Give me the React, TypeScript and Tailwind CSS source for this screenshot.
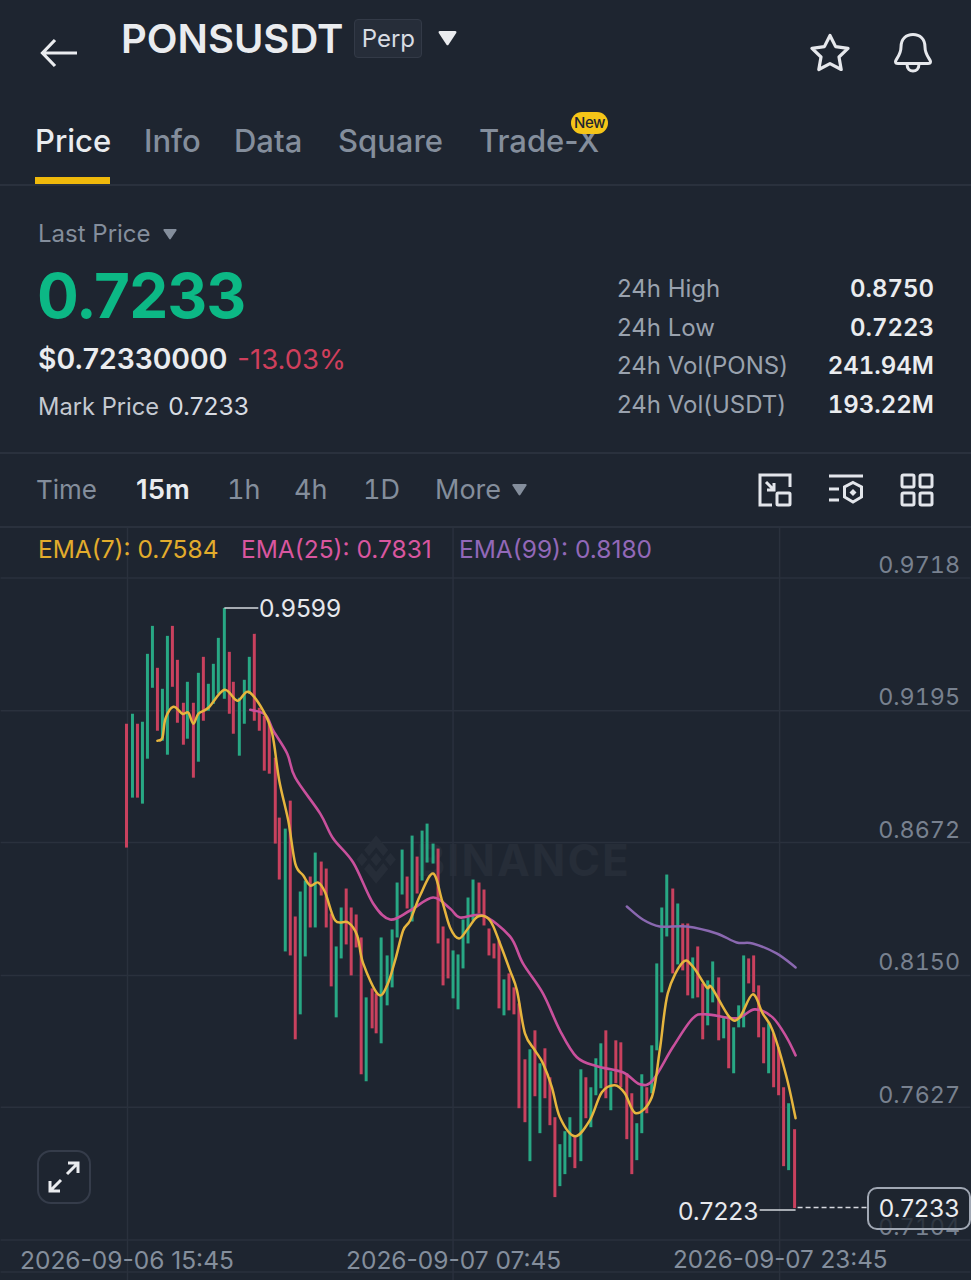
const FONT = "font-['Inter','Noto_Sans',sans-serif]";

type Candle = [number, number, number, "r" | "g"];

const candles: Candle[] = [
  [126, 723, 847, "r"], [132, 713, 797, "g"], [137, 723, 797, "r"], [142, 721, 803, "g"],
  [147, 653, 758, "g"], [152, 625, 687, "g"], [157, 667, 730, "r"], [162, 688, 740, "g"],
  [167, 635, 754, "g"], [172, 625, 686, "r"], [177, 659, 722, "r"], [183, 702, 744, "r"],
  [187, 681, 738, "g"], [193, 702, 777, "r"], [198, 672, 761, "g"], [203, 656, 720, "r"],
  [208, 683, 710, "g"], [213, 663, 703, "g"], [218, 637, 693, "g"], [224, 607, 698, "g"],
  [229, 651, 713, "r"], [233, 681, 733, "r"], [239, 697, 755, "g"], [244, 679, 723, "g"],
  [249, 656, 693, "g"], [254, 633, 720, "r"], [259, 707, 730, "r"], [264, 715, 770, "r"],
  [269, 722, 773, "r"], [275, 757, 843, "r"], [279, 817, 879, "r"], [285, 828, 951, "g"],
  [290, 800, 955, "r"], [295, 916, 1039, "r"], [300, 891, 1014, "g"], [305, 880, 956, "g"],
  [310, 876, 927, "r"], [315, 852, 927, "g"], [321, 861, 895, "r"], [326, 868, 927, "r"],
  [331, 913, 986, "r"], [336, 946, 1017, "g"], [341, 907, 958, "g"], [346, 888, 944, "r"],
  [351, 907, 975, "r"], [356, 914, 947, "r"], [361, 937, 1074, "r"], [366, 997, 1081, "g"],
  [372, 988, 1028, "r"], [376, 993, 1033, "r"], [381, 937, 1043, "g"], [387, 955, 1005, "g"],
  [392, 929, 987, "g"], [397, 882, 937, "g"], [402, 849, 894, "g"], [407, 876, 908, "r"],
  [412, 835, 921, "g"], [417, 856, 893, "r"], [422, 830, 880, "g"], [427, 823, 862, "g"],
  [433, 843, 863, "g"], [438, 848, 943, "r"], [443, 926, 985, "r"], [448, 938, 978, "r"],
  [453, 950, 998, "g"], [458, 954, 1009, "g"], [463, 919, 968, "g"], [468, 897, 943, "g"],
  [473, 879, 920, "g"], [479, 882, 913, "r"], [484, 889, 925, "r"], [489, 928, 955, "r"],
  [494, 943, 958, "r"], [499, 940, 1008, "r"], [504, 979, 1015, "g"], [509, 973, 1010, "r"],
  [514, 987, 1014, "r"], [519, 1003, 1108, "r"], [525, 1059, 1122, "r"], [530, 1049, 1161, "g"],
  [535, 1030, 1096, "r"], [540, 1063, 1133, "g"], [545, 1048, 1098, "r"], [550, 1077, 1125, "r"],
  [555, 1117, 1197, "r"], [560, 1144, 1186, "g"], [565, 1131, 1174, "g"], [570, 1117, 1157, "g"],
  [575, 1135, 1168, "r"], [581, 1069, 1161, "g"], [586, 1077, 1118, "r"], [591, 1087, 1127, "g"],
  [596, 1058, 1095, "g"], [601, 1043, 1088, "g"], [606, 1030, 1098, "r"], [611, 1071, 1110, "g"],
  [616, 1040, 1083, "r"], [621, 1042, 1087, "r"], [627, 1073, 1139, "r"], [632, 1093, 1174, "r"],
  [637, 1123, 1160, "g"], [642, 1074, 1133, "g"], [647, 1087, 1113, "r"], [652, 1045, 1093, "g"],
  [657, 963, 1050, "g"], [662, 907, 992, "g"], [667, 874, 936, "g"], [673, 888, 973, "r"],
  [678, 903, 964, "g"], [683, 923, 970, "r"], [688, 923, 995, "r"], [693, 957, 998, "g"],
  [698, 946, 997, "r"], [703, 983, 1039, "r"], [708, 980, 1025, "g"], [713, 961, 1002, "g"],
  [719, 977, 1040, "r"], [724, 1017, 1038, "g"], [729, 1017, 1068, "r"], [734, 1027, 1073, "g"],
  [739, 1005, 1027, "g"], [744, 955, 1027, "g"], [749, 958, 983, "r"], [754, 955, 992, "r"],
  [759, 985, 1037, "r"], [764, 1027, 1063, "r"], [769, 1023, 1073, "g"], [774, 1033, 1087, "r"],
  [779, 1047, 1095, "r"], [784, 1087, 1166, "r"], [789, 1103, 1170, "g"], [795, 1129, 1208, "r"],
];

const ema7: [number, number][] = [
  [157, 740], [162, 737], [165, 718], [173, 706], [182, 713], [188, 712], [193, 723], [198, 713],
  [208, 707], [224, 689], [237, 700], [248, 691], [263, 710], [272, 733], [279, 780], [288, 820],
  [295, 863], [303, 875], [310, 885], [318, 882], [325, 892], [335, 920], [348, 922], [357, 935],
  [363, 963], [378, 994], [387, 985], [395, 960], [403, 930], [410, 920], [420, 895], [433, 873],
  [442, 900], [450, 927], [459, 938], [468, 928], [478, 916], [490, 920], [500, 943], [510, 970],
  [517, 990], [525, 1033], [535, 1050], [543, 1063], [552, 1087], [560, 1117], [575, 1136],
  [590, 1120], [602, 1092], [615, 1085], [625, 1093], [636, 1113], [652, 1097], [660, 1050],
  [668, 993], [683, 962], [693, 966], [707, 987], [712, 987], [730, 1017], [740, 1017], [753, 994],
  [763, 1013], [773, 1030], [787, 1077], [796, 1118],
];

const ema25: [number, number][] = [
  [250, 709], [265, 714], [273, 730], [287, 753], [295, 777], [320, 813], [333, 838], [353, 862],
  [373, 903], [390, 919], [410, 910], [433, 897], [450, 908], [460, 917], [483, 915], [510, 936],
  [523, 963], [543, 993], [560, 1030], [577, 1057], [597, 1066], [623, 1072], [640, 1084],
  [653, 1080], [673, 1047], [693, 1018], [707, 1014], [737, 1018], [755, 1009], [773, 1017],
  [787, 1037], [796, 1055],
];

const ema99: [number, number][] = [
  [627, 906], [643, 919], [660, 926], [687, 926], [717, 933], [737, 942], [753, 943], [777, 953], [796, 967],
];

// catmull-rom through the points so the averages don't look kinked
function smooth(pts: [number, number][]) {
  let d = `M${pts[0][0]} ${pts[0][1]}`;
  for (let i = 0; i < pts.length - 1; i++) {
    const p0 = pts[Math.max(i - 1, 0)];
    const p1 = pts[i];
    const p2 = pts[i + 1];
    const p3 = pts[Math.min(i + 2, pts.length - 1)];
    const c1x = p1[0] + (p2[0] - p0[0]) / 6;
    const c1y = p1[1] + (p2[1] - p0[1]) / 6;
    const c2x = p2[0] - (p3[0] - p1[0]) / 6;
    const c2y = p2[1] - (p3[1] - p1[1]) / 6;
    d += ` C${c1x.toFixed(1)} ${c1y.toFixed(1)} ${c2x.toFixed(1)} ${c2y.toFixed(1)} ${p2[0]} ${p2[1]}`;
  }
  return d;
}

const stats = [
  { label: "24h High", value: "0.8750" },
  { label: "24h Low", value: "0.7223" },
  { label: "24h Vol(PONS)", value: "241.94M" },
  { label: "24h Vol(USDT)", value: "193.22M" },
];

const priceLabels = [
  { text: "0.9718", cls: "top-[22px]" },
  { text: "0.9195", cls: "top-[154px]" },
  { text: "0.8672", cls: "top-[287px]" },
  { text: "0.8150", cls: "top-[419px]" },
  { text: "0.7627", cls: "top-[552px]" },
  { text: "0.7104", cls: "top-[684px]" },
];

function Caret({ className }: { className: string }) {
  return (
    <svg viewBox="0 0 16 12" className={className} fill="currentColor">
      <path d="M1 1.5 C0.6 0.8 1 0 1.8 0 H14.2 C15 0 15.4 0.8 15 1.5 L8.8 11 C8.4 11.6 7.6 11.6 7.2 11 Z" />
    </svg>
  );
}

function Chart() {
  return (
    <svg viewBox="0 527 971 753" className="absolute inset-0 w-full h-full" fill="none">
      <g stroke="#2a313d" strokeWidth="1.5">
        {[577, 710, 842, 975, 1107, 1240, 1272].map((y) => (
          <line key={y} x1="0" x2="971" y1={y} y2={y} />
        ))}
        {[127, 453, 780].map((x) => (
          <line key={x} x1={x} x2={x} y1="527" y2="1280" />
        ))}
      </g>

      {/* watermark logo */}
      <g fill="#262d38" transform="translate(354 832) scale(1.1 1.35)">
        <path d="M20 2 L31 13 L26.5 17.5 L20 11 L13.5 17.5 L9 13 Z" />
        <path d="M20 38 L31 27 L26.5 22.5 L20 29 L13.5 22.5 L9 27 Z" />
        <path d="M20 15 L25 20 L20 25 L15 20 Z" />
        <path d="M7 15 L12 20 L7 25 L2 20 Z" />
        <path d="M33 15 L38 20 L33 25 L28 20 Z" />
      </g>
      <g>
        {candles.map(([x, y1, y2, c], i) => (
          <line
            key={i}
            x1={x}
            x2={x}
            y1={y1}
            y2={y2}
            stroke={c === "r" ? "#c9415e" : "#28a884"}
            strokeWidth="3"
          />
        ))}
      </g>
      <path d={smooth(ema99)} stroke="#8a68b0" strokeWidth="2.5" strokeLinecap="round" />
      <path d={smooth(ema25)} stroke="#c9509c" strokeWidth="2.6" strokeLinecap="round" />
      <path d={smooth(ema7)} stroke="#e6b53e" strokeWidth="2.5" strokeLinecap="round" />

      <path d="M224 607 H258" stroke="#d5d8de" strokeWidth="1.5" />
      <path d="M760 1210 H796" stroke="#d5d8de" strokeWidth="1.5" />
      <path d="M798 1207.5 H867" stroke="#d5d8de" strokeWidth="1.5" strokeDasharray="5 3" />
    </svg>
  );
}

export default function App() {
  return (
    <div className={`${FONT} w-[971px] h-[1280px] overflow-hidden flex flex-col bg-[#1e2530] text-[#eaecef]`}>
      {/* Header */}
      <div className="h-[100px] flex items-start relative">
        <svg viewBox="0 0 38 30" className="w-[38px] h-[30px] ml-[40px] mt-[38px] text-[#eaecef]" fill="none" stroke="currentColor" strokeWidth="3.2">
          <path d="M37 15 H3 M15 2 L2.5 15 L15 28" />
        </svg>
        <div className="ml-[43px] mt-[14px] flex items-start">
          <span className="text-[40px] leading-[50px] font-semibold">PONSUSDT</span>
          <span className="ml-[11px] mt-[5px] h-[39px] w-[68px] flex items-center justify-center rounded-[4px] border border-[#333a47] bg-[#262d39] text-[24px] text-[#d8dce3]">
            Perp
          </span>
          <Caret className="ml-[15px] mt-[17px] w-[21px] h-[15px] text-[#eaecef]" />
        </div>
        <div className="ml-auto mr-[38px] mt-[33px] flex items-start gap-[43px] text-[#e6e8ec]">
          <svg viewBox="0 0 40 40" className="w-[40px] h-[40px]" fill="none" stroke="currentColor" strokeWidth="3.2" strokeLinejoin="round">
            <path d="M20 2.5 L25.6 13.6 L38 15.4 L29 24 L31.2 36.5 L20 30.6 L8.8 36.5 L11 24 L2 15.4 L14.4 13.6 Z" />
          </svg>
          <svg viewBox="0 0 40 40" className="w-[40px] h-[40px]" fill="none" stroke="currentColor" strokeWidth="3">
            <path d="M2.5 28.5 C2.5 26.5 8 22 8 14 C8 6 13 1.5 20 1.5 C27 1.5 32 6 32 14 C32 22 37.5 26.5 37.5 28.5 C37.5 30 36.5 30.5 35 30.5 H5 C3.5 30.5 2.5 30 2.5 28.5 Z" />
            <path d="M14 31 C14 36 17 38 20 38 C23 38 26 36 26 31" />
          </svg>
        </div>
      </div>

      {/* Tabs */}
      <div className="h-[86px] border-b-2 border-[#2a313d] flex items-start gap-[34px] pl-[35px] pt-[21px] text-[31px] leading-[40px] font-medium text-[#848e9c]">
        <div className="relative w-[75px] h-[63px] text-[#eaecef]">
          Price
          <div className="absolute left-0 right-0 bottom-0 h-[7px] bg-[#f0b90b]" />
        </div>
        <div className="w-[56px]">Info</div>
        <div className="w-[70px]">Data</div>
        <div className="w-[107px]">Square</div>
        <div className="relative">
          Trade-X
          <span className="absolute left-[92px] top-[-9px] w-[37px] h-[22px] rounded-full bg-[#f5c518] text-[#1e2530] text-[15px] leading-[22px] text-center font-medium tracking-[-0.5px]">
            New
          </span>
        </div>
      </div>

      {/* Price block */}
      <div className="h-[268px] border-b-2 border-[#2a313d] flex justify-between pl-[38px] pr-[37px]">
        <div>
          <div className="mt-[33px] flex items-center text-[24px] leading-[30px] text-[#848e9c]">
            Last Price
            <Caret className="ml-[11px] w-[16px] h-[11px]" />
          </div>
          <div className="mt-[11px] -ml-[1px] text-[62px] leading-[72px] font-bold text-[#0cb885] tracking-[-1px]">0.7233</div>
          <div className="mt-[9px] flex items-baseline leading-[36px]">
            <span className="text-[28.3px] font-semibold">$0.72330000</span>
            <span className="ml-[10px] text-[27.5px] text-[#cf3f5c]">-13.03%</span>
          </div>
          <div className="mt-[13px] leading-[32px]">
            <span className="text-[23.7px] text-[#c4c9d1]">Mark Price</span>
            <span className="ml-[9px] text-[24.5px] text-[#d8dce3]">0.7233</span>
          </div>
        </div>
        <div className="mt-[85px] w-[317px] flex flex-col gap-[2px]">
          {stats.map((s) => (
            <div key={s.label} className="flex justify-between text-[24px] leading-[36.7px]">
              <span className="text-[#9aa2ae]">{s.label}</span>
              <span className="font-semibold tabular-nums">{s.value}</span>
            </div>
          ))}
        </div>
      </div>

      {/* Interval bar */}
      <div className="h-[74px] border-b-2 border-[#2a313d] flex items-center pl-[36px] pr-[37px] text-[27px] text-[#848e9c]">
        <span className="w-[100px] text-[26px] leading-[30px] -mt-[1px]">Time</span>
        <span className="w-[91px] text-[27.5px] font-semibold text-[#eaecef]">15m</span>
        <span className="w-[67px] tabular-nums">1h</span>
        <span className="w-[69px]">4h</span>
        <span className="w-[72px] tabular-nums">1D</span>
        <span>More</span>
        <Caret className="ml-[10px] w-[17px] h-[12px]" />
        <div className="ml-auto flex items-center gap-[36px] text-[#e3e6eb]">
          <svg viewBox="0 0 34 34" className="w-[34px] h-[34px]" fill="none" stroke="currentColor" strokeWidth="3">
            <path d="M14 32 H2 V2 H32 V14" />
            <rect x="19" y="20" width="13" height="12" rx="1" />
            <path d="M8 9 L16 17 M16 10 V17 H9" />
          </svg>
          <svg viewBox="0 0 36 34" className="w-[36px] h-[34px]" fill="none" stroke="currentColor" strokeWidth="3">
            <path d="M1 3 H35 M1 16 H11 M1 27 H11" />
            <path d="M25 9.5 L33.5 14 V24 L25 29 L16.5 24 V14 Z" />
            <path d="M25 16 L28.5 19.5 L25 23 L21.5 19.5 Z" fill="currentColor" stroke="none" />
          </svg>
          <svg viewBox="0 0 34 34" className="w-[34px] h-[34px]" fill="none" stroke="currentColor" strokeWidth="3">
            <rect x="2" y="2" width="12" height="12" rx="1.5" />
            <rect x="20" y="2" width="12" height="12" rx="1.5" />
            <rect x="2" y="20" width="12" height="12" rx="1.5" />
            <rect x="20" y="20" width="12" height="12" rx="1.5" />
          </svg>
        </div>
      </div>

      {/* Chart */}
      <div className="relative flex-1">
        <div className="absolute left-[416px] top-[304px] text-[44px] leading-[56px] font-bold tracking-[2px] text-[#262d38]">
          BINANCE
        </div>
        <Chart />

        <div className="relative flex pl-[38px] pt-[6px] text-[24.5px] leading-[30px]">
          <span className="w-[203px] text-[#e2ac2c]">EMA(7): 0.7584</span>
          <span className="w-[218px] text-[#d9569f]">EMA(25): 0.7831</span>
          <span className="text-[#9268b8]">EMA(99): 0.8180</span>
        </div>

        {priceLabels.map((p) => (
          <span key={p.text} className={`absolute right-[11px] text-[23.3px] leading-[30px] tabular-nums text-[#78818f] ${p.cls}`}>
            {p.text}
          </span>
        ))}

        <span className="absolute left-[259px] top-[65px] text-[24.5px] leading-[30px] text-[#e6e8ec]">0.9599</span>
        <span className="absolute left-[678px] top-[668px] text-[24.5px] leading-[30px] text-[#e6e8ec]">0.7223</span>

        <div className="absolute right-0 top-[659px] w-[104px] h-[43px] rounded-[10px] border-2 border-[#a0a7b3] bg-[#1e2530]/80 flex items-center justify-center text-[24.5px] text-[#eaecef]">
          0.7233
        </div>

        <div className="absolute left-[37px] top-[622px] w-[54px] h-[54px] rounded-[14px] border-2 border-[#353c4a] flex items-center justify-center">
          <svg viewBox="0 0 34 34" className="w-[34px] h-[34px] text-[#eaecef]" fill="none" stroke="currentColor" strokeWidth="3">
            <path d="M20 14 L31 3 M21 3 H31 V13" />
            <path d="M14 20 L3 31 M13 31 H3 V21" />
          </svg>
        </div>

        <span className="absolute left-[20px] top-[717px] text-[24.5px] leading-[30px] text-[#848e9c]">2026-09-06 15:45</span>
        <span className="absolute left-[346px] top-[717px] text-[24.5px] leading-[30px] text-[#848e9c]">2026-09-07 07:45</span>
        <span className="absolute left-[673px] top-[717px] text-[24.2px] leading-[30px] text-[#848e9c]">2026-09-07 23:45</span>
      </div>
    </div>
  );
}
